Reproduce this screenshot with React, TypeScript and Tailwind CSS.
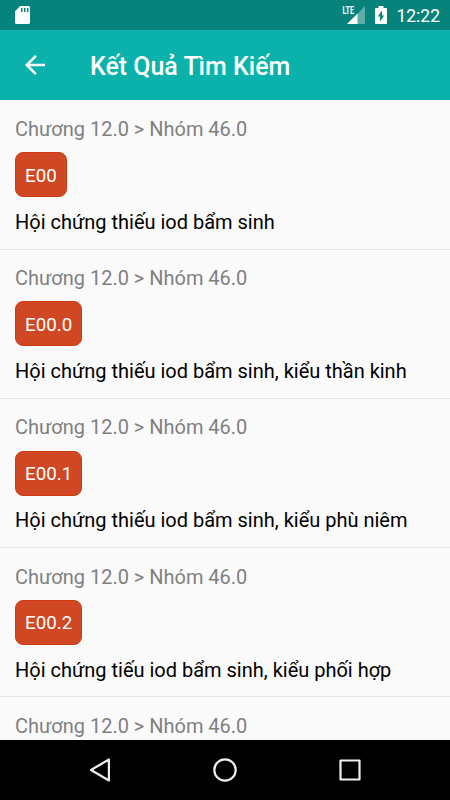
import React from "react";

const results = [
  { code: "E00", name: "Hội chứng thiếu iod bẩm sinh" },
  { code: "E00.0", name: "Hội chứng thiếu iod bẩm sinh, kiểu thần kinh" },
  { code: "E00.1", name: "Hội chứng thiếu iod bẩm sinh, kiểu phù niêm" },
  { code: "E00.2", name: "Hội chứng tiếu iod bẩm sinh, kiểu phối hợp" },
];

function StatusBar() {
  return (
    <div className="flex h-[30px] shrink-0 items-center bg-[#07837b] pl-[15px] pr-[10px] text-white">
      <svg width="15" height="18" viewBox="0 0 15 18" fill="currentColor">
        <path fillRule="evenodd" d="M5.200 0h8.200A1.600 1.600 0 0 1 15 1.600v14.800a1.600 1.600 0 0 1-1.600 1.600H1.600A1.600 1.600 0 0 1 0 16.400V5.200zM6 2v4h1.500V2zM9 2v4h1.500V2zM12 2v4h1.500V2z" />
      </svg>
      <div className="ml-auto flex items-center">
        <svg width="24" height="20" viewBox="0 0 24 20">
          <path d="M23 1v18H5.500L15.500 9z" fill="#fff" opacity=".35" />
          <path d="M15.500 8.500V19H5z" fill="#fff" />
          <text x="0.500" y="8.800" fontSize="10.500" fontWeight="700" fill="#fff" fontFamily="Roboto, sans-serif" textLength="11.500" lengthAdjust="spacingAndGlyphs">LTE</text>
        </svg>
        <svg className="ml-[9px]" width="12" height="18" viewBox="0 0 12 18" fill="currentColor">
          <path fillRule="evenodd" d="M3.500 0h5v2H11q1 0 1 1v14q0 1-1 1H1q-1 0-1-1V3q0-1 1-1h2.500zM7 4.500l-4.200 6H5V15.500l4.200-6H7z" />
        </svg>
        <span className="ml-[9px] mt-px text-[17.5px] leading-[30px]">12:22</span>
      </div>
    </div>
  );
}

export default function App() {
  return (
    <div className="flex h-[800px] w-[450px] flex-col overflow-hidden bg-[#fafafa] font-[Roboto,sans-serif]">
      <StatusBar />
      <header className="flex h-[70px] shrink-0 items-center bg-[#0ab2ab] pl-[20px] text-white">
        <svg width="30" height="30" viewBox="0 0 24 24" fill="currentColor">
          <path d="M20 11H7.830l5.590-5.590L12 4l-8 8 8 8 1.410-1.410L7.830 13H20v-2z" />
        </svg>
        <h1 className="ml-[40px] mt-[3px] text-[24.950px] font-medium leading-[34px]">Kết Quả Tìm Kiếm</h1>
      </header>
      <main className="min-h-0 flex-1 overflow-hidden">
        {results.map((r) => (
          <article key={r.code} className="h-[149.200px] px-[15px] pt-[17px]">
            <p className="text-[19.980px] leading-[25px] text-[#808080]">Chương 12.0 &gt; Nhóm 46.0</p>
            <div className="mt-[10.300px] flex h-[45px] w-fit items-center rounded-[8px] border border-[#cf3a0e] bg-[#cf4823] px-[9px] pt-[2px] text-[18.750px] text-white">{r.code}</div>
            <p className="mt-[11.700px] whitespace-nowrap text-[19.990px] leading-[26px] text-black">{r.name}</p>
            <hr className="-mx-[15px] mt-[13.800px] border-[#e4e4e4]" />
          </article>
        ))}
        <p className="px-[15px] pt-[17px] text-[19.980px] leading-[25px] text-[#808080]">Chương 12.0 &gt; Nhóm 46.0</p>
      </main>
      <nav className="flex h-[60px] shrink-0 items-center justify-center gap-[95px] bg-black">
        <svg width="30" height="30" viewBox="0 0 30 30" fill="none" stroke="#eee" strokeWidth="2.2" strokeLinejoin="round"><path d="M23.900 4.500v21L6 15z" /></svg>
        <svg width="30" height="30" viewBox="0 0 30 30" fill="none" stroke="#eee" strokeWidth="2.2"><circle cx="15" cy="15" r="10.700" /></svg>
        <svg width="30" height="30" viewBox="0 0 30 30" fill="none" stroke="#eee" strokeWidth="2.2" strokeLinejoin="round"><path d="M5.500 5.500h19v19h-19z" /></svg>
      </nav>
    </div>
  );
}
